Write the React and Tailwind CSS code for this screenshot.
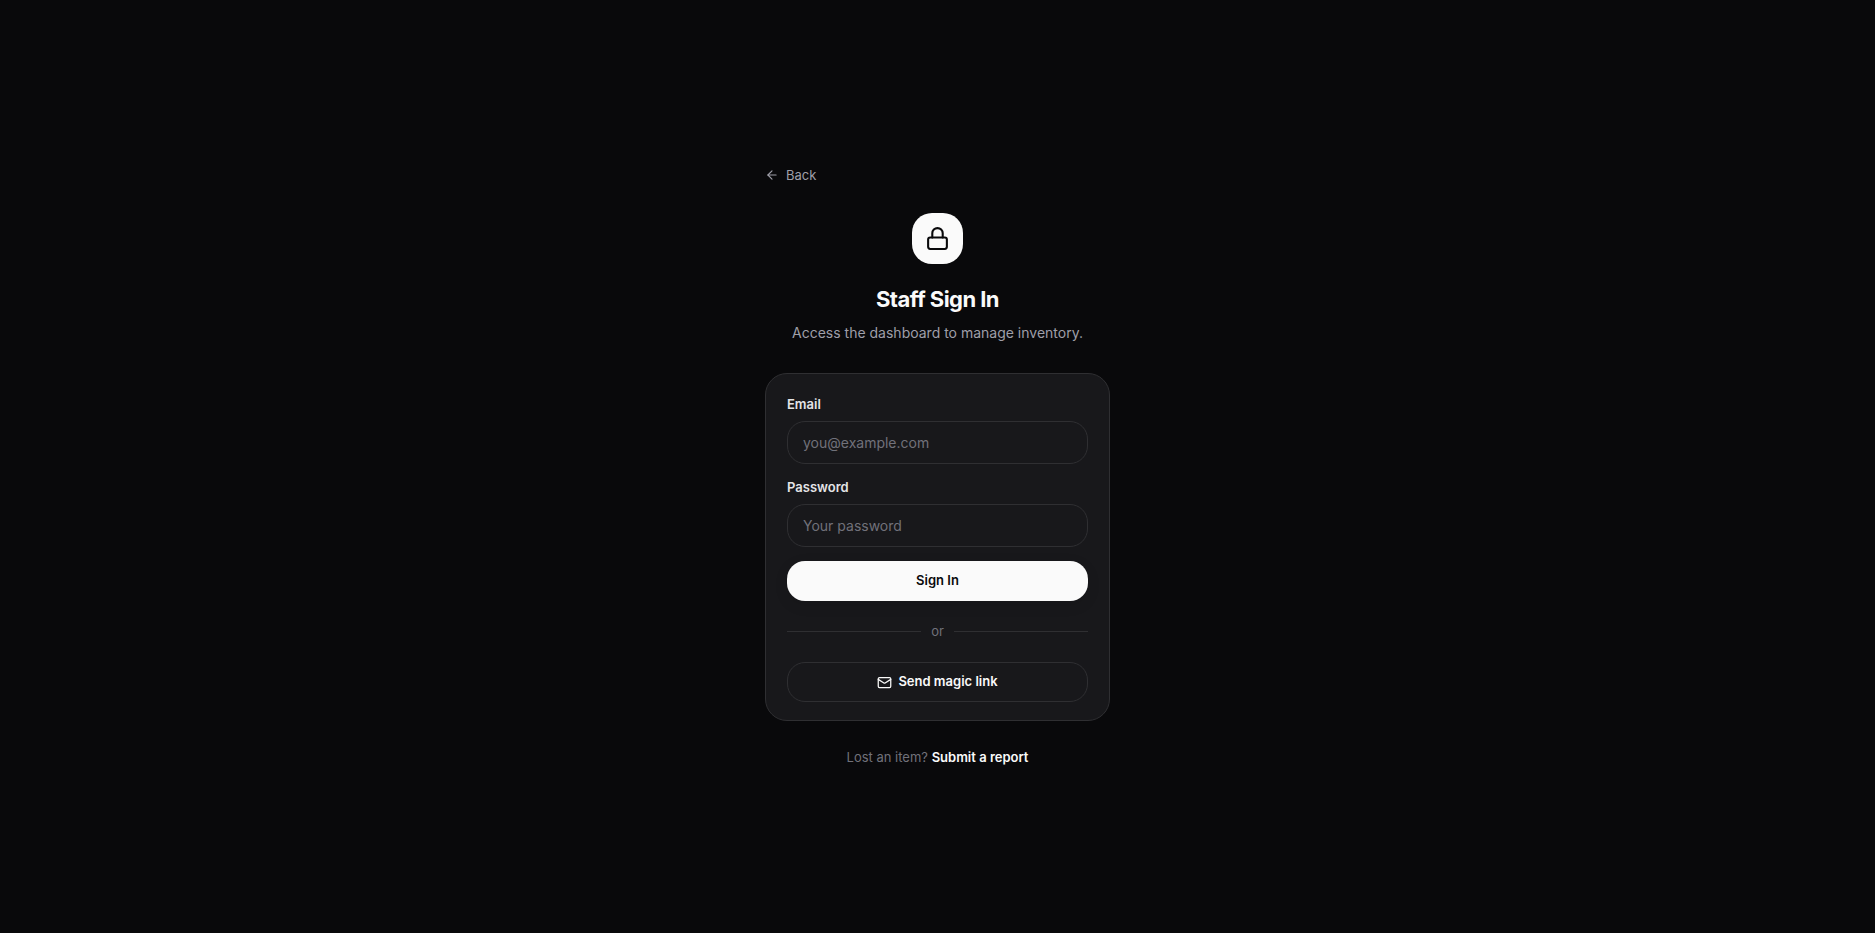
import { ArrowLeft, Lock, Mail } from 'lucide-react';

const inputClass =
  'mt-2 h-[43px] w-full rounded-[18px] border border-[#2f2f32] bg-transparent px-[15px] text-[14px] text-zinc-50 outline-none placeholder:text-[#71717a] focus:border-zinc-500';

function Field({ id, label, type, placeholder }) {
  return (
    <div>
      <label htmlFor={id} className="block text-[13px] leading-[18px] font-semibold text-zinc-200">
        {label}
      </label>
      <input id={id} type={type} placeholder={placeholder} className={inputClass} />
    </div>
  );
}

export default function App() {
  return (
    <div className="flex min-h-screen flex-col items-center justify-center bg-[#09090b] pb-[3px] font-['Inter',sans-serif] text-zinc-50">
      <main className="w-full max-w-[345px]">
        <a href="#" className="inline-flex items-center gap-[7px] text-[13px] leading-[18px] text-[#9f9fa9]">
          <ArrowLeft size={14} />
          Back
        </a>

        <header className="mt-[25px] flex flex-col items-center text-center">
          <div className="flex size-[51px] items-center justify-center rounded-[20px] bg-[#fafafa] text-[#09090b]">
            <Lock size={25} strokeWidth={2} />
          </div>
          <h1 className="mt-[19px] text-[22px] leading-8 font-bold tracking-tight">Staff Sign In</h1>
          <p className="mt-[6px] text-[14px] leading-6 text-[#9f9fa9]">
            Access the dashboard to manage inventory.
          </p>
        </header>

        <section className="mt-7 rounded-[22px] border border-[#2f2f32] bg-[#18181b] px-[21px] pt-[21px] pb-[18px]">
          <form className="flex flex-col gap-[14px]">
            <Field id="email" label="Email" type="email" placeholder="you@example.com" />
            <Field id="password" label="Password" type="password" placeholder="Your password" />
            <button
              type="button"
              className="h-10 w-full rounded-[18px] bg-[#fafafa] text-[13px] font-semibold text-[#09090b] shadow-[0_4px_14px_rgba(0,0,0,0.1)]"
            >
              Sign In
            </button>
          </form>
          <div className="my-[21px] flex items-center gap-[10px] text-[13px] leading-[19px] text-[#71717a]">
            <span className="h-px flex-1 bg-[#2f2f32]" />
            or
            <span className="h-px flex-1 bg-[#2f2f32]" />
          </div>
          <button
            type="button"
            className="flex h-10 w-full items-center justify-center gap-[6px] rounded-[18px] border border-[#2f2f32] text-[13px] font-semibold"
          >
            <Mail size={15} />
            Send magic link
          </button>
        </section>

        <p className="mt-[27px] text-center text-[13px] leading-[18px] text-[#71717a]">
          Lost an item?{' '}
          <a href="#" className="font-semibold text-zinc-50">
            Submit a report
          </a>
        </p>
      </main>
    </div>
  );
}
